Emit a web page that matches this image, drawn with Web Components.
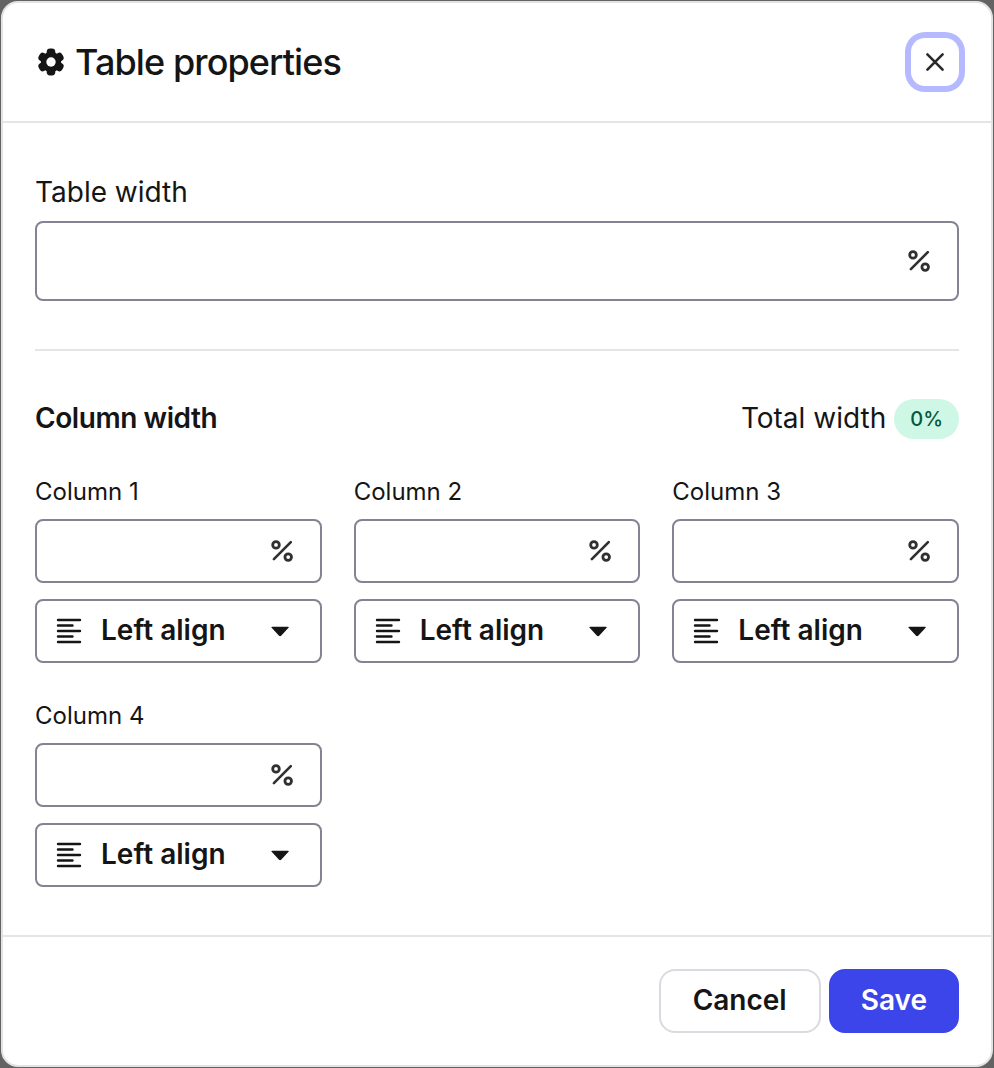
<!DOCTYPE html>
<html lang="en">
<head>
<meta charset="utf-8">
<title>Table properties</title>
<style>
body {
  margin: 0;
  padding: 1px;
  height: 1066px;
  background: #636363;
  color: #151515;
  font-family: Inter, "Liberation Sans", sans-serif;
}
</style>
</head>
<body>
<app-dialog>
  <app-icon slot="title" name="gear" size="30"></app-icon>
  <span slot="title">Table properties</span>

  <percent-field class="large" label="Table width"></percent-field>
  <column-widths total="0%" count="4"></column-widths>

  <app-button slot="footer">Cancel</app-button>
  <app-button slot="footer" variant="primary">Save</app-button>
</app-dialog>

<script>
const icons = {
  gear: `<g fill="currentColor">
      <circle cx="15" cy="15" r="10.2"/>
      <rect x="10.7" y="1.5" width="8.6" height="27" rx="3.4"/>
      <rect x="10.7" y="1.5" width="8.6" height="27" rx="3.4" transform="rotate(60 15 15)"/>
      <rect x="10.7" y="1.5" width="8.6" height="27" rx="3.4" transform="rotate(120 15 15)"/>
    </g>
    <circle cx="15" cy="15" r="4.7" fill="#fff"/>`,
  close: `<path d="M7.4 7.4L22.6 22.6M22.6 7.4L7.4 22.6" stroke="#29292b" stroke-width="2.6" stroke-linecap="round"/>`,
  percent: `<g fill="none" stroke="#303030" stroke-width="2.8" stroke-linecap="round">
      <circle cx="8" cy="7.9" r="3.3"/>
      <circle cx="20.2" cy="20.1" r="3.3"/>
      <path d="M22.8 5.2L5.9 22.1" stroke-width="2.6"/>
    </g>`,
  left: `<path d="M3 3H25M3 8.5H17.5M3 14H25M3 19.5H17.5M3 25H25" stroke="currentColor" stroke-width="2.4" stroke-linecap="round"/>`,
  caret: `<path d="M6.4 9.7H21.8Q23.6 9.7 22.3 11.1L15.4 18.6Q14.1 19.9 12.8 18.6L5.9 11.1Q4.6 9.7 6.4 9.7Z" fill="currentColor"/>`
}

class AppIcon extends HTMLElement {
  constructor() {
    super()
    this.attachShadow({mode: 'open'})
  }

  connectedCallback() {
    const size = this.getAttribute('size') || 28
    this.shadowRoot.innerHTML = `
      <style>
        :host { display: block; flex: none; }
        svg { display: block; }
      </style>
      <svg width="${size}" height="${size}" viewBox="0 0 ${size} ${size}">${icons[this.getAttribute('name')]}</svg>`
  }
}

class AppButton extends HTMLElement {
  constructor() {
    super()
    this.attachShadow({mode: 'open'})
    this.shadowRoot.innerHTML = `
      <style>
        :host { display: block; }
        button {
          display: block;
          box-sizing: border-box;
          height: 64px;
          padding: 0 32px 2px;
          border: 2px solid #dadae0;
          border-radius: 16px;
          background: #fff;
          color: inherit;
          font: 600 28px/58px Inter, "Liberation Sans", sans-serif;
        }
        :host([variant="primary"]) button {
          border-color: #3b45e9;
          background: #3b45e9;
          color: #fff;
          padding: 0 30px 2px;
        }
      </style>
      <button type="button"><slot></slot></button>`
  }
}

class PercentField extends HTMLElement {
  constructor() {
    super()
    this.attachShadow({mode: 'open'})
  }

  connectedCallback() {
    this.shadowRoot.innerHTML = `
      <style>
        :host { display: block; }
        label { display: block; font-size: 24px; line-height: 32px; margin-bottom: 11px; }
        .box {
          display: flex;
          align-items: center;
          box-sizing: border-box;
          height: 64px;
          padding-right: 24px;
          border: 2px solid #838394;
          border-radius: 8px;
        }
        input { flex: 1; min-width: 0; height: 100%; box-sizing: border-box; border: 0; outline: 0; background: none; font: inherit; }
        :host(.large) label { font-size: 28px; line-height: 36px; }
        :host(.large) .box { height: 80px; }
      </style>
      <label>${this.getAttribute('label')}</label>
      <div class="box"><input type="text"><app-icon name="percent"></app-icon></div>`
  }
}

class AlignSelect extends HTMLElement {
  constructor() {
    super()
    this.attachShadow({mode: 'open'})
    this.shadowRoot.innerHTML = `
      <style>
        :host {
          display: flex;
          align-items: center;
          box-sizing: border-box;
          height: 64px;
          padding: 0 26px 0 18px;
          border: 2px solid #838394;
          border-radius: 8px;
          font-size: 28px;
          font-weight: 600;
        }
        span { flex: 1; margin-left: 18px; line-height: 34px; margin-top: -2px; }
      </style>
      <app-icon name="left"></app-icon>
      <span><slot></slot></span>
      <app-icon name="caret"></app-icon>`
  }
}

class ColumnWidths extends HTMLElement {
  constructor() {
    super()
    this.attachShadow({mode: 'open'})
  }

  connectedCallback() {
    let columns = ''
    for (let i = 1; i <= Number(this.getAttribute('count')); i++) {
      columns += `
        <div>
          <percent-field label="Column ${i}"></percent-field>
          <align-select>Left align</align-select>
        </div>`
    }
    this.shadowRoot.innerHTML = `
      <style>
        :host { display: block; margin-top: 48px; padding-top: 48px; border-top: 2px solid #e5e5e5; }
        header { display: flex; align-items: center; height: 40px; font-size: 28px; }
        h2 { flex: 1; margin: 0 0 2px; font-size: 28px; font-weight: 600; line-height: 38px; letter-spacing: -0.42px; }
        header span { margin-bottom: 2px; }
        .badge {
          margin-left: 8px;
          padding: 0 16px;
          border-radius: 20px;
          background: #cff7e6;
          color: #07583a;
          font-size: 20px;
          font-weight: 500;
          line-height: 40px;
        }
        .grid {
          display: grid;
          grid-template-columns: repeat(3, minmax(0, 1fr));
          gap: 37px 32px;
          margin-top: 37px;
        }
        align-select { margin-top: 16px; }
      </style>
      <header>
        <h2>Column width</h2>
        <span>Total width</span>
        <b class="badge">${this.getAttribute('total')}</b>
      </header>
      <div class="grid">${columns}</div>`
  }
}

class AppDialog extends HTMLElement {
  constructor() {
    super()
    this.attachShadow({mode: 'open'})
    this.shadowRoot.innerHTML = `
      <style>
        :host {
          display: flex;
          flex-direction: column;
          box-sizing: border-box;
          height: 100%;
          border: 2px solid #e3e3e3;
          border-radius: 17px;
          background: #fff;
        }
        header {
          display: flex;
          align-items: center;
          box-sizing: border-box;
          height: 120px;
          padding: 0 32px 0 33px;
          border-bottom: 2px solid #e5e5e5;
        }
        h1 {
          display: flex;
          align-items: center;
          gap: 9px;
          flex: 1;
          margin: 0;
          font-size: 36px;
          font-weight: 500;
          line-height: 44px;
          letter-spacing: -0.9px;
        }
        .close {
          display: flex;
          align-items: center;
          justify-content: center;
          width: 48px;
          height: 48px;
          padding: 0;
          border: 0;
          border-radius: 14px;
          background: #fff;
          box-shadow: 0 0 0 6px #b5b9ff;
        }
        main { flex: 1; padding: 51px 32px 0; }
        footer {
          display: flex;
          justify-content: flex-end;
          gap: 8px;
          padding: 32px;
          border-top: 2px solid #e5e5e5;
        }
      </style>
      <header>
        <h1><slot name="title"></slot></h1>
        <button class="close" type="button" aria-label="Close"><app-icon name="close" size="30"></app-icon></button>
      </header>
      <main><slot></slot></main>
      <footer><slot name="footer"></slot></footer>`
  }
}

customElements.define('app-icon', AppIcon)
customElements.define('app-button', AppButton)
customElements.define('percent-field', PercentField)
customElements.define('align-select', AlignSelect)
customElements.define('column-widths', ColumnWidths)
customElements.define('app-dialog', AppDialog)
</script>
</body>
</html>
